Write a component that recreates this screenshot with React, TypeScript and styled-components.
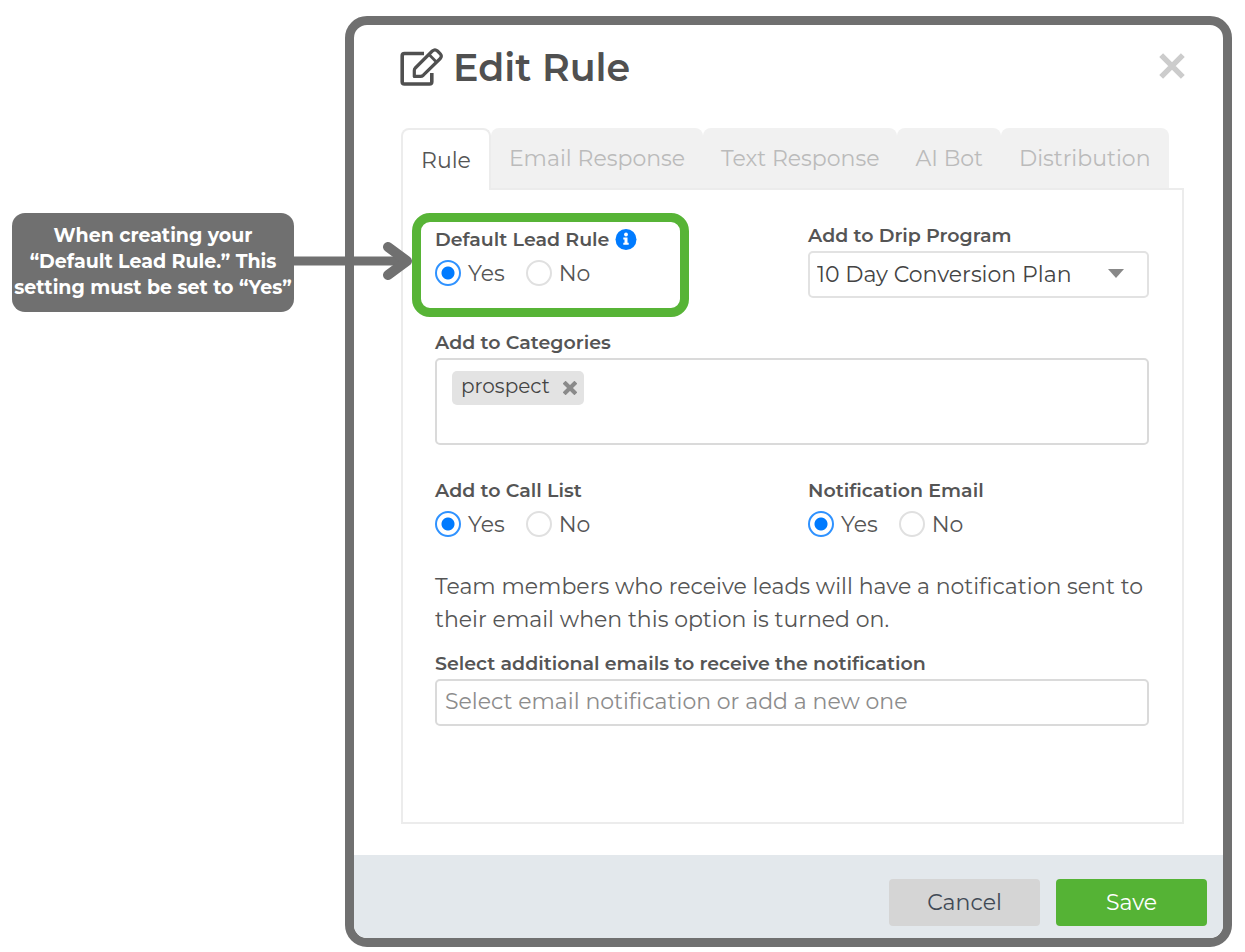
import React, { useState } from 'react';
import styled, { createGlobalStyle, css } from 'styled-components';

const GlobalStyle = createGlobalStyle`
  *, *::before, *::after { box-sizing: border-box; }
  body {
    margin: 0;
    background: #fff;
    color: #555;
    font-family: Montserrat, Inter, sans-serif;
    font-size: 22px;
  }
  button, input, select { font: inherit; color: inherit; }
`;

const Page = styled.div`
  display: flex;
  align-items: flex-start;
  gap: 51px;
  padding: 16px 13px 5px 12px;
`;

const Callout = styled.aside`
  position: relative;
  z-index: 1;
  flex: 0 0 282px;
  height: 99px;
  margin-top: 197px;
  padding-top: 10px;
  border-radius: 13px;
  background: #707070;
  color: #fff;
  font-size: 19px;
  font-weight: 700;
  line-height: 26px;
  text-align: center;
  white-space: nowrap;
`;

const Arrow = styled.svg`
  position: absolute;
  left: 100%;
  top: 28px;
  width: 119px;
  height: 40px;
`;

const Modal = styled.main`
  flex: 1;
  min-width: 0;
  border: 9px solid #707070;
  border-radius: 22px;
  overflow: hidden;
  background: #fff;
`;

const Header = styled.header`
  display: flex;
  align-items: center;
  gap: 10px;
  padding: 19px 38px 0 46px;
  color: #505050;
`;

const Title = styled.h1`
  flex: 1;
  margin: 0;
  font-size: 38px;
  font-weight: 600;
  line-height: 48px;
`;

const CloseButton = styled.button`
  display: flex;
  padding: 0 0 4px;
  border: 0;
  background: none;
  color: #ccc;
`;

const Content = styled.section`
  padding: 36px 39px 31px 47px;
`;

const TabBar = styled.div`
  display: flex;
`;

const Tab = styled.button<{ $active: boolean }>`
  height: 60px;
  padding: 0 18px;
  border: 0;
  border-radius: 8px 8px 0 0;
  background: #f1f1f1;
  color: #bbb;
  white-space: nowrap;
  ${(p) =>
    p.$active &&
    css`
      height: 62px;
      margin-bottom: -2px;
      border: 2px solid #ececec;
      border-bottom: 0;
      background: #fff;
      color: #555;
    `}
`;

const Panel = styled.form`
  display: flex;
  flex-direction: column;
  gap: 33px;
  padding: 34px 33px 96px 32px;
  border: 2px solid #ececec;
`;

const Columns = styled.div`
  display: grid;
  grid-template-columns: 1fr 1fr;
  column-gap: 32px;
`;

const Field = styled.div`
  display: flex;
  flex-direction: column;
  gap: 3px;
`;

const RadioGroup = styled.div`
  position: relative;
`;

const Highlight = styled.div`
  position: absolute;
  left: -23px;
  top: -11px;
  width: 277px;
  height: 104px;
  border: 9px solid #57b436;
  border-radius: 18px;
  pointer-events: none;
`;

const RadioField = styled.fieldset`
  min-width: 0;
  margin: 0;
  padding: 0;
  border: 0;
`;

const labelText = css`
  font-size: 19px;
  font-weight: 600;
  line-height: 24px;
`;

const Label = styled.label`
  ${labelText}
`;

const Legend = styled.legend<{ $tall?: boolean }>`
  ${labelText}
  display: flex;
  align-items: center;
  gap: 6px;
  height: ${(p) => (p.$tall ? 32 : 26)}px;
  margin-bottom: ${(p) => (p.$tall ? 4 : 7)}px;
  padding: 0;
`;

const Options = styled.div`
  display: flex;
  gap: 21px;
`;

const Option = styled.label`
  display: flex;
  align-items: center;
  gap: 7px;
  height: 26px;
`;

const Radio = styled.input.attrs({ type: 'radio' })`
  appearance: none;
  width: 26px;
  height: 26px;
  margin: 0;
  border: 2px solid #e0e0e0;
  border-radius: 50%;
  background: #fff;
  &:checked {
    border-color: #2f92ff;
    background: radial-gradient(circle, #007bff 6px, #fff 7px);
  }
`;

const control = css`
  width: 100%;
  height: 47px;
  padding: 0 8px;
  border: 2px solid #e2e2e2;
  border-radius: 5px;
  background: #fff;
`;

const SelectWrap = styled.div`
  position: relative;
`;

const Select = styled.select`
  ${control}
  display: block;
  padding: 0 7px;
  appearance: none;
  color: #444;
`;

const Caret = styled.svg`
  position: absolute;
  right: 25px;
  top: 18px;
  pointer-events: none;
`;

const TextInput = styled.input`
  ${control}
  padding-bottom: 2px;
  border-color: #dadada;
  &::placeholder { color: #8c8c8c; opacity: 1; }
`;

const TagBox = styled.div`
  ${control}
  display: flex;
  align-items: flex-start;
  height: auto;
  min-height: 87px;
  padding: 11px 15px;
  border-color: #dadada;
`;

const Tag = styled.span`
  display: flex;
  align-items: center;
  gap: 13px;
  height: 34px;
  padding: 0 7px 4px 9px;
  border-radius: 5px;
  background: #e3e3e3;
  color: #444;
  font-size: 20px;
`;

const TagRemove = styled.button`
  display: flex;
  padding: 4px 0 0;
  border: 0;
  background: none;
  color: #8a8a8a;
`;

const Note = styled.p`
  margin: 0 0 -17px;
  line-height: 33px;
`;

const Footer = styled.footer`
  display: flex;
  justify-content: flex-end;
  gap: 16px;
  padding: 24px 16px 12px;
  background: #e3e8ec;
`;

const Action = styled.button<{ $primary?: boolean }>`
  width: 151px;
  height: 47px;
  padding: 0;
  border: 0;
  border-radius: 4px;
  background: ${(p) => (p.$primary ? '#55b335' : '#d5d5d5')};
  color: ${(p) => (p.$primary ? '#fff' : '#414a55')};
`;

const tabs = ['Rule', 'Email Response', 'Text Response', 'AI Bot', 'Distribution'];

const EditIcon = () => (
  <svg width="43" height="40" viewBox="0 0 43 40" fill="none" stroke="currentColor" strokeLinejoin="round" aria-hidden="true">
    <path d="M24 5.500H4.500Q2.200 5.500 2.200 7.800V33.700Q2.200 36 4.500 36H29.500Q31.800 36 31.800 33.700V25" strokeWidth="3.600" />
    <path d="M14.300 28.400V22.500Q14.300 21 15.300 20L32.300 3Q35 .800 37.500 3L40.300 5.800Q42.300 8 40.300 10.500L23.300 27.200Q22 28.400 20.500 28.400Z" strokeWidth="3.200" />
    <path d="M29 6.500L36.700 14.200" strokeWidth="2.800" />
  </svg>
);

const Cross = ({ size, weight }: { size: number; weight: number }) => (
  <svg width={size} height={size} viewBox="0 0 24 24" stroke="currentColor" strokeWidth={weight} aria-hidden="true">
    <path d="M2 2L22 22M22 2L2 22" />
  </svg>
);

const InfoIcon = () => (
  <svg width="22" height="22" viewBox="0 0 22 22" role="img" aria-label="More information">
    <circle cx="11" cy="10.500" r="10.500" fill="#007bff" />
    <circle cx="11" cy="5.500" r="1.900" fill="#fff" />
    <path d="M8.300 8.500H12.500V13.800H13.700V15.800H8.300V13.800H9.500V10.500H8.300Z" fill="#fff" />
  </svg>
);

function YesNo({ name, label, info, highlight }: { name: string; label: string; info?: boolean; highlight?: boolean }) {
  return (
    <RadioGroup>
      <RadioField>
        <Legend $tall={info}>
          {label}
          {info && <InfoIcon />}
        </Legend>
        <Options>
          <Option><Radio name={name} value="yes" defaultChecked />Yes</Option>
          <Option><Radio name={name} value="no" />No</Option>
        </Options>
      </RadioField>
      {highlight && <Highlight />}
    </RadioGroup>
  );
}

export default function App() {
  const [active, setActive] = useState('Rule');
  return (
    <>
      <GlobalStyle />
      <Page>
        <Callout>
          When creating your<br />“Default Lead Rule.” This<br />setting must be set to “Yes”
          <Arrow viewBox="0 0 119 40" fill="none" stroke="#707070" strokeLinecap="round" strokeLinejoin="round" aria-hidden="true">
            <path d="M-5 20H112" strokeWidth="9" />
            <path d="M94 6L113 20L94 34" strokeWidth="10" />
          </Arrow>
        </Callout>
        <Modal>
          <Header>
            <EditIcon />
            <Title>Edit Rule</Title>
            <CloseButton type="button" aria-label="Close"><Cross size={26} weight={5} /></CloseButton>
          </Header>
          <Content>
            <TabBar role="tablist">
              {tabs.map((t) => (
                <Tab key={t} type="button" role="tab" aria-selected={t === active} $active={t === active} onClick={() => setActive(t)}>
                  {t}
                </Tab>
              ))}
            </TabBar>
            <Panel>
              <Columns>
                <YesNo name="default" label="Default Lead Rule" info highlight />
                <Field>
                  <Label htmlFor="drip">Add to Drip Program</Label>
                  <SelectWrap>
                    <Select id="drip">
                      <option>10 Day Conversion Plan</option>
                    </Select>
                    <Caret width="16" height="9" viewBox="0 0 16 9" aria-hidden="true"><path d="M0 0H16L8 9Z" fill="#888" /></Caret>
                  </SelectWrap>
                </Field>
              </Columns>
              <Field>
                <Label as="span" id="categories">Add to Categories</Label>
                <TagBox role="group" aria-labelledby="categories">
                  <Tag>
                    prospect
                    <TagRemove type="button" aria-label="Remove prospect"><Cross size={14} weight={7} /></TagRemove>
                  </Tag>
                </TagBox>
              </Field>
              <Columns>
                <YesNo name="calls" label="Add to Call List" />
                <YesNo name="notify" label="Notification Email" />
              </Columns>
              <Note>
                Team members who receive leads will have a notification sent to their email when this option is turned on.
              </Note>
              <Field>
                <Label htmlFor="emails">Select additional emails to receive the notification</Label>
                <TextInput id="emails" placeholder="Select email notification or add a new one" />
              </Field>
            </Panel>
          </Content>
          <Footer>
            <Action type="button">Cancel</Action>
            <Action type="submit" $primary>Save</Action>
          </Footer>
        </Modal>
      </Page>
    </>
  );
}
